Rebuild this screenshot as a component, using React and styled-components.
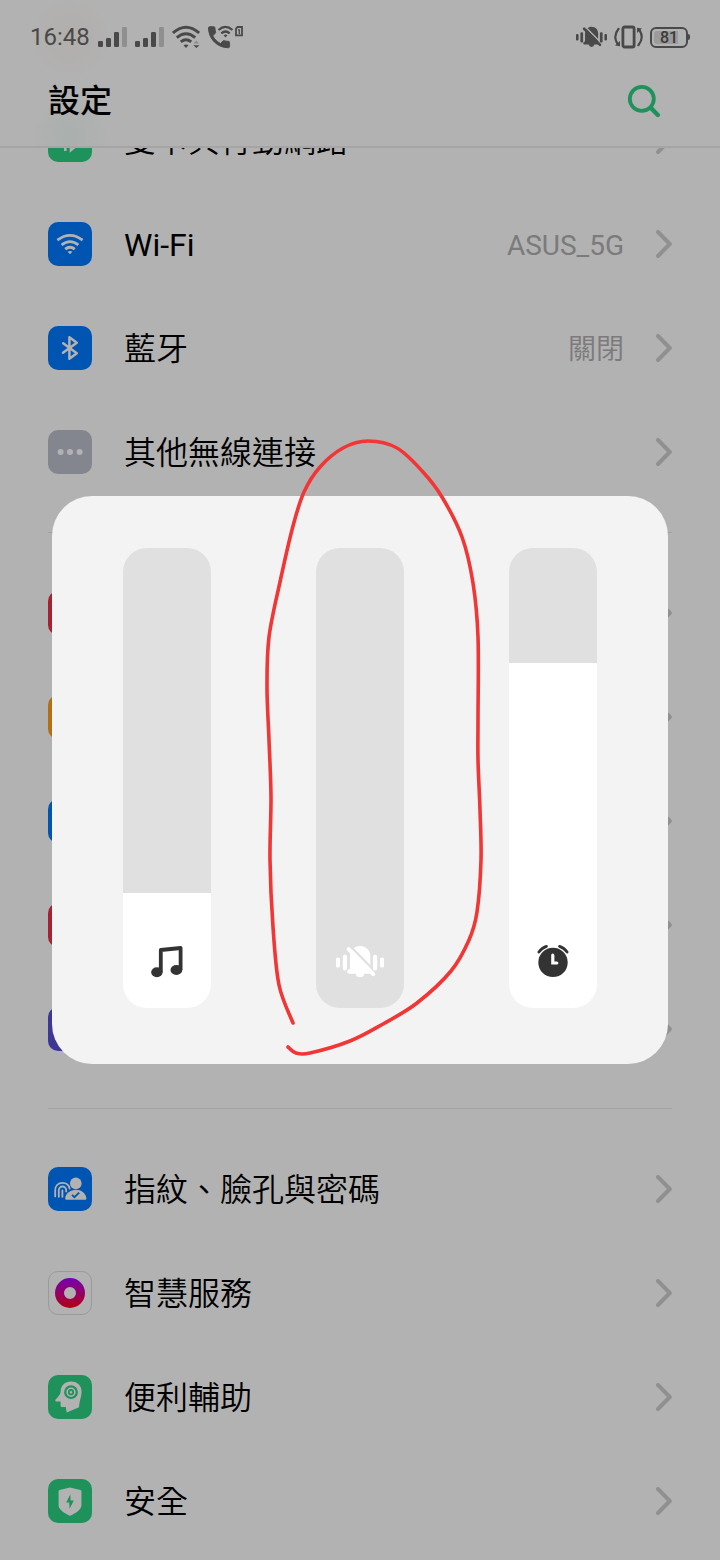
import React, { useId, useState } from 'react';
import styled, { createGlobalStyle, ThemeProvider } from 'styled-components';

const theme = {
  colors: {
    page: '#ffffff',
    text: '#000000',
    value: '#b0b0b0',
    chevron: '#cfcfcf',
    line: '#e8e8e8',
    status: '#696969',
    statusLight: '#cdcdcd',
    green: '#2bd282',
    blue: '#007aff',
    grey: '#bcc0cc',
    red: '#f03048',
    orange: '#ffa01e',
    purple: '#5b4fd6',
    panel: '#f3f3f3',
    track: '#e0e0e0',
    ink: '#333333',
    marker: '#f23535',
  },
  fontSizes: {
    xs: '16px',
    s: '24px',
    m: '28px',
    l: '32px',
  },
};

const GlobalStyle = createGlobalStyle`
  *, *::before, *::after {
    box-sizing: border-box;
  }
  body {
    margin: 0;
    background: #ffffff;
    font-family: Roboto, 'Noto Sans CJK TC', sans-serif;
  }
`;

const Page = styled.div`
  min-height: 100vh;
  background: ${({ theme }) => theme.colors.page};
  color: ${({ theme }) => theme.colors.text};
`;

const Header = styled.header`
  position: sticky;
  top: 0;
  z-index: 1;
  border-bottom: 2px solid #ececec;
  background:
    radial-gradient(circle at 70px 38px, rgba(255, 150, 70, 0.05), transparent 40px),
    radial-gradient(circle at 70px 136px, rgba(43, 210, 130, 0.06), transparent 40px),
    ${({ theme }) => theme.colors.page};
`;

const StatusBar = styled.div`
  display: flex;
  align-items: center;
  justify-content: space-between;
  height: 74px;
  padding: 0 30px;
  color: ${({ theme }) => theme.colors.status};
`;

const StatusGroup = styled.div`
  display: flex;
  align-items: center;
  gap: ${({ $tight }) => ($tight ? '7px' : '8px')};
`;

const Clock = styled.time`
  font-size: ${({ theme }) => theme.fontSizes.s};
  line-height: 28px;
`;

const Battery = styled.span`
  display: flex;
  align-items: center;
`;

const BatteryShell = styled.span`
  width: 38px;
  height: 21px;
  padding: 2px;
  border: 2px solid currentColor;
  border-radius: 6px;
`;

const BatteryLevel = styled.span`
  display: block;
  height: 13px;
  border-radius: 3px;
  background: linear-gradient(to right, #dedede ${({ $level }) => $level}%, transparent 0);
  color: #555555;
  font-size: ${({ theme }) => theme.fontSizes.xs};
  font-weight: 500;
  line-height: 14px;
  text-align: center;
`;

const BatteryTip = styled.span`
  width: 2px;
  height: 6px;
  border-radius: 0 2px 2px 0;
  background: currentColor;
`;

const TitleBar = styled.div`
  display: flex;
  align-items: center;
  justify-content: space-between;
  padding: 0 48px 18px;
`;

const Title = styled.h1`
  margin: 0;
  font-size: ${({ theme }) => theme.fontSizes.l};
  font-weight: 500;
  line-height: 54px;
`;

const SearchButton = styled.button`
  display: flex;
  align-items: center;
  justify-content: center;
  width: 56px;
  height: 54px;
  padding: 0;
  border: 0;
  background: none;
  color: ${({ theme }) => theme.colors.green};
  cursor: pointer;
`;

// the list is scrolled a little, so its first row goes under the header
const Content = styled.main`
  margin-top: -60px;
  padding: 0 48px 8px;
`;

const List = styled.ul`
  margin: 0;
  padding: 0;
  list-style: none;

  & + & {
    padding-top: 28px;
    margin-top: 28px;
    border-top: 1px solid ${({ theme }) => theme.colors.line};
    margin-bottom: -1px;
  }
`;

const RowLink = styled.a`
  display: flex;
  align-items: center;
  gap: 32px;
  height: 104px;
  color: inherit;
  text-decoration: none;
`;

const Tile = styled.span`
  flex: none;
  display: block;
  width: 44px;
  height: 44px;
  border-radius: 10px;
  border: ${({ $outlined }) => ($outlined ? '1px solid #dddddd' : '0')};
  overflow: hidden;
  background: ${({ theme, $color }) => theme.colors[$color]};
  color: #ffffff;
`;

// the Chinese face has a cut between light and regular, Roboto has not
const Label = styled.span`
  flex: 1;
  padding-top: 2px;
  font-size: ${({ theme }) => theme.fontSizes.l};
  font-weight: ${({ $latin }) => ($latin ? 400 : 350)};
  line-height: 48px;
`;

const Value = styled.span`
  padding-top: 4px;
  color: ${({ theme }) => theme.colors.value};
  font-size: ${({ theme }) => theme.fontSizes.m};
  font-weight: ${({ $latin }) => ($latin ? 400 : 350)};
  line-height: 40px;
`;

const Arrow = styled.svg`
  flex: none;
  color: ${({ theme }) => theme.colors.chevron};
`;

const Icon = styled.svg`
  display: block;
  flex: none;
`;

const Scrim = styled.div`
  position: fixed;
  inset: 0;
  z-index: 2;
  display: flex;
  align-items: center;
  justify-content: center;
  padding: 0 52px;
  background: rgba(0, 0, 0, 0.3);
`;

const VolumePanel = styled.section`
  display: flex;
  justify-content: space-between;
  width: 100%;
  padding: 52px 71px 56px;
  border-radius: 40px;
  background: ${({ theme }) => theme.colors.panel};
`;

const Slider = styled.label`
  position: relative;
  display: block;
  width: 88px;
  height: 460px;
  border-radius: 24px;
  overflow: hidden;
  color: ${({ theme, $muted }) => ($muted ? '#ffffff' : theme.colors.ink)};
`;

const Range = styled.input`
  display: block;
  width: 100%;
  height: 100%;
  margin: 0;
  appearance: none;
  writing-mode: vertical-lr;
  direction: rtl;
  background: linear-gradient(
    to top,
    #ffffff var(--level),
    ${({ theme }) => theme.colors.track} var(--level)
  );
  cursor: pointer;

  &::-webkit-slider-thumb {
    appearance: none;
    width: 88px;
    height: 1px;
    background: transparent;
  }
`;

const SliderIcon = styled.span`
  position: absolute;
  left: 0;
  right: 0;
  bottom: 28px;
  display: flex;
  align-items: center;
  justify-content: center;
  height: 36px;
  pointer-events: none;
`;

const Marker = styled.svg`
  position: absolute;
  inset: 0;
  width: 100%;
  height: 100%;
  pointer-events: none;
  color: ${({ theme }) => theme.colors.marker};
`;

/* status icons */

const SignalIcon = () => (
  <Icon width="29" height="20" viewBox="0 0 29 20" fill="currentColor">
    <rect x="0" y="14" width="5" height="6" rx="1.2" />
    <rect x="8" y="11" width="5" height="9" rx="1.2" />
    <rect x="16" y="5" width="5" height="15" rx="1.2" />
    <rect x="24" y="0" width="5" height="20" rx="1.2" fill={theme.colors.statusLight} />
  </Icon>
);

const WifiStatusIcon = () => (
  <Icon width="28" height="24" viewBox="0 0 28 24" fill="none" stroke="currentColor" strokeWidth="3">
    <path d="M0.9 8Q14-3.6 27.1 8" />
    <path d="M4.8 12.6Q14 4.8 23.2 12.6" />
    <path d="M8.8 16.8Q14 12.6 19.2 16.8" />
    <path d="M11.5 20.2Q14 18.6 16.5 20.2L14 23Z" fill="currentColor" stroke="none" />
    <path d="M21.4 18.5L24.4 15.6L27.4 18.5Z" fill={theme.colors.statusLight} stroke="none" />
    <path d="M21.4 20.2H27.4L24.4 23Z" fill="currentColor" stroke="none" />
  </Icon>
);

const WifiCallIcon = () => (
  <Icon width="36" height="24" viewBox="0 0 36 24" fill="none" stroke="currentColor">
    <path
      transform="translate(-3 -1.8) scale(1.17)"
      fill="currentColor"
      strokeWidth="0.8"
      d="M6.62 10.79c1.44 2.83 3.76 5.14 6.59 6.59l2.2-2.2c.27-.27.67-.36 1.02-.24 1.12.37 2.33.57 3.57.57.55 0 1 .45 1 1V20c0 .55-.45 1-1 1-9.39 0-17-7.61-17-17 0-.55.45-1 1-1h3.5c.55 0 1 .45 1 1 0 1.25.2 2.45.57 3.57.11.35.03.74-.25 1.02l-2.2 2.2z"
    />
    <path d="M10.5 5Q17.5-1.2 24.5 5" strokeWidth="2.2" />
    <path d="M13.3 8.4Q17.5 4.6 21.7 8.4" strokeWidth="2.2" />
    <path d="M15.6 10.2Q17.5 8.8 19.4 10.2L17.5 12.4Z" fill="currentColor" stroke="none" />
    <path d="M29.6 2H34V10.4H28V3.6Z" strokeWidth="1.8" />
    <path d="M29.9 4.8H31.3V9" strokeWidth="1.3" />
  </Icon>
);

const BellOffIcon = ({ width, height }) => {
  const id = useId();
  return (
    <Icon width={width} height={height} viewBox="0 0 48 34" fill="currentColor">
      <mask id={id}>
        <rect width="48" height="34" fill="#fff" />
        <path d="M12.2-1L41 28.4" stroke="#000" strokeWidth="2.2" />
      </mask>
      <rect x="0" y="12.4" width="4" height="10.2" rx="1.6" />
      <rect x="6.8" y="9.8" width="4.2" height="15.6" rx="1.6" />
      <rect x="37" y="9.8" width="4.2" height="15.6" rx="1.6" />
      <rect x="44" y="12.4" width="4" height="10.2" rx="1.6" />
      <path
        mask={`url(#${id})`}
        d="M14 10.6C15 4.4 19 1 24 1C29.8 1 34.3 5.4 34.3 11V24.4H36V28.8H28.4A4.5 4.5 0 0 1 19.6 28.8H13A2.1 2.1 0 0 1 12.4 24.8L14 23.6Z"
      />
      <path d="M12.6 4.2L37.2 29.2" stroke="currentColor" strokeWidth="4" strokeLinecap="round" />
    </Icon>
  );
};

const VibrateIcon = () => (
  <Icon width="29" height="24" viewBox="0 0 29 24" fill="none" stroke="currentColor" strokeWidth="2.2">
    <rect x="8.9" y="2" width="11.2" height="20" rx="1.8" strokeWidth="2.8" />
    <path d="M4.6 3.8C0.8 8.4 0.6 14 3.2 18.4" strokeLinecap="round" />
    <path d="M6 16V21.2L1 20.6Z" fill="currentColor" stroke="none" />
    <path d="M24.4 20.2C28.2 15.6 28.4 10 25.8 5.6" strokeLinecap="round" />
    <path d="M23 8V2.8L28 3.4Z" fill="currentColor" stroke="none" />
  </Icon>
);

const SearchIcon = () => (
  <Icon width="34" height="34" viewBox="0 0 34 34" fill="none" stroke="currentColor" strokeLinecap="round">
    <circle cx="14.8" cy="14.8" r="12" strokeWidth="3.8" />
    <path d="M24 24L30.8 31" strokeWidth="4.4" />
  </Icon>
);

const Chevron = () => (
  <Arrow width="16" height="28" viewBox="0 0 16 28" fill="none" stroke="currentColor" strokeWidth="4" strokeLinecap="round" strokeLinejoin="round">
    <path d="M2 2L13.8 14L2 26" />
  </Arrow>
);

/* tile icons, all drawn on a 44 x 44 grid */

const SimIcon = () => (
  <g fill="none" stroke="currentColor" strokeWidth="2.6">
    <path d="M11 17L17.3 11V33" />
    <path d="M29.6 26.4L23 32V11" />
  </g>
);

const WifiIcon = () => (
  <g fill="none" stroke="currentColor" strokeWidth="2.8">
    <path d="M9.4 18.2Q22 8.6 34.6 18.2" />
    <path d="M13.6 23Q22 16.2 30.4 23" />
    <path d="M17.2 27.2Q22 23.4 26.8 27.2" />
    <path d="M19.6 29.8Q22 28.2 24.4 29.8L22 32.2Z" fill="currentColor" stroke="none" />
  </g>
);

const BluetoothIcon = () => (
  <path
    d="M15.2 17.2L28.8 27.2L21.4 32.8V11.2L28.8 16.8L15 26.8"
    fill="none"
    stroke="currentColor"
    strokeWidth="2.5"
    strokeLinecap="round"
    strokeLinejoin="round"
  />
);

const MoreIcon = () => (
  <g fill="currentColor">
    <circle cx="12.6" cy="22" r="3" />
    <circle cx="22" cy="22" r="3" />
    <circle cx="31.6" cy="22" r="3" />
  </g>
);

const BiometricsIcon = () => (
  <g fill="currentColor">
    <circle cx="27.8" cy="16.4" r="5.8" />
    <path d="M17.2 31.4C17.2 26.8 22.6 22.8 28 22.8C33.2 22.8 37.4 26 38.4 31C38.6 32 38 32.8 37 32.8H18.6C17.8 32.8 17.2 32.2 17.2 31.4Z" />
    <path d="M24 27.8L26.4 30.2L31.2 25.6" fill="none" stroke={theme.colors.blue} strokeWidth="1.8" />
    <g fill="none" stroke="currentColor" strokeWidth="1.8" strokeLinecap="round">
      <path d="M7.2 29.4V23.4C7.2 18.6 10.4 15.8 14.4 15.8C18.2 15.8 21 18 21.6 21.6" />
      <path d="M10.8 29.8V23.2A3.7 3.7 0 0 1 18.2 23.2V24.4" />
      <path d="M14.4 29.8V23.4" />
    </g>
  </g>
);

const SmartIcon = () => (
  <>
    <linearGradient id="smart" x1="0" y1="0" x2="0" y2="1">
      <stop offset="0" stopColor="#a400ff" />
      <stop offset="0.5" stopColor="#d60094" />
      <stop offset="1" stopColor="#ff0018" />
    </linearGradient>
    <path fill="url(#smart)" fillRule="evenodd" d="M22 7A15 15 0 0 1 22 37A15 15 0 0 1 22 7ZM22 16A6 6 0 0 0 22 28A6 6 0 0 0 22 16Z" />
  </>
);

const HeadIcon = () => (
  <>
    <path
      fill="currentColor"
      d="M12.6 17C12.8 10.6 17 6.6 23.2 6.6C29.6 6.6 33.8 10.8 33.6 17C33.5 20.6 32 25 31.4 28.4C31 30.4 31.6 32 30 32.8L18.6 37.4L17.8 32H14.2C13 32 12.6 31.4 12.6 30.4V26.4H8.2C7.2 26.4 7 25.4 7.6 24.6C9.8 21.8 12.4 20 12.6 17Z"
    />
    <circle cx="23" cy="17.2" r="5.8" fill="none" stroke={theme.colors.green} strokeWidth="2.2" />
    <circle cx="23" cy="17.2" r="2.2" fill="none" stroke={theme.colors.green} strokeWidth="1.8" />
  </>
);

const ShieldIcon = () => (
  <>
    <path
      fill="currentColor"
      d="M22 8.4L32.4 11C33.1 11.2 33.4 11.6 33.4 12.2V26.2C33.4 31 27 34.4 22 36.8C17 34.4 10.6 31 10.6 26.2V12.2C10.6 11.6 10.9 11.2 11.6 11Z"
    />
    <path fill={theme.colors.green} d="M22.4 15.2L18.2 23.6H21.2L21.6 29.8L25.8 21.4H22.6Z" />
  </>
);

/* slider icons */

const MusicIcon = () => (
  <Icon width="32" height="32" viewBox="0 0 32 32" fill="currentColor">
    <ellipse cx="5.9" cy="26.2" rx="5.7" ry="5" />
    <ellipse cx="25.4" cy="24" rx="5.9" ry="5" />
    <path d="M9.8 26V4L29.6 2V24" fill="none" stroke="currentColor" strokeWidth="3.8" strokeLinejoin="round" />
  </Icon>
);

const AlarmIcon = () => (
  <Icon width="32" height="34" viewBox="0 0 32 34" fill="none" stroke="currentColor" strokeLinecap="round" strokeWidth="2.8">
    <circle cx="16" cy="17.4" r="14.7" fill="currentColor" stroke="none" />
    <path d="M1.9 7Q5 2.8 9.4 1.4" />
    <path d="M30.1 7Q27 2.8 22.6 1.4" />
    <path d="M15.8 10.2V18H19.8" stroke="#fff" strokeWidth="3.2" />
  </Icon>
);

const sections = [
  [
    { label: '雙卡與行動網路', color: 'green', icon: SimIcon },
    { label: 'Wi-Fi', color: 'blue', icon: WifiIcon, value: 'ASUS_5G', latin: true },
    { label: '藍牙', color: 'blue', icon: BluetoothIcon, value: '關閉' },
    { label: '其他無線連接', color: 'grey', icon: MoreIcon },
  ],
  [{ color: 'red' }, { color: 'orange' }, { color: 'blue' }, { color: 'red' }, { color: 'purple' }],
  [
    { label: '指紋、臉孔與密碼', color: 'blue', icon: BiometricsIcon },
    { label: '智慧服務', color: 'page', icon: SmartIcon, outlined: true },
    { label: '便利輔助', color: 'green', icon: HeadIcon },
    { label: '安全', color: 'green', icon: ShieldIcon },
  ],
];

const SettingRow = ({ label, color, icon: Glyph, value, outlined, latin }) => (
  <li>
    <RowLink href="#">
      <Tile $color={color} $outlined={outlined}>
        {Glyph && (
          <Icon width="100%" height="100%" viewBox={outlined ? '1 1 42 42' : '0 0 44 44'}>
            <Glyph />
          </Icon>
        )}
      </Tile>
      <Label $latin={latin}>{label}</Label>
      {value && <Value $latin={latin}>{value}</Value>}
      <Chevron />
    </RowLink>
  </li>
);

const VolumeSlider = ({ name, initial, muted, children }) => {
  const [level, setLevel] = useState(initial);
  return (
    <Slider $muted={muted}>
      <Range
        type="range"
        min="0"
        max="100"
        aria-label={name}
        value={level}
        onChange={(e) => setLevel(Number(e.target.value))}
        style={{ '--level': `${level}%` }}
      />
      <SliderIcon>{children}</SliderIcon>
    </Slider>
  );
};

// freehand stroke round the middle slider
const strokePoints = [
  [293, 1023], [279, 985], [273, 927], [270, 860], [271, 797], [269, 740], [267, 687],
  [269, 637], [280, 582], [293, 526], [304, 492], [320, 467], [343, 448], [368, 441],
  [397, 448], [423, 472], [442, 497], [462, 537], [473, 583], [478, 637], [478, 720],
  [478, 760], [480, 810], [481, 860], [477, 912], [469, 940], [451, 971], [417, 1003],
  [383, 1024], [350, 1041], [310, 1053], [296, 1053], [288, 1047],
];

const smoothPath = (points) =>
  points.slice(1).reduce((d, p, i) => {
    const p0 = points[i - 1] || points[i];
    const p1 = points[i];
    const p3 = points[i + 2] || p;
    const c1 = [p1[0] + (p[0] - p0[0]) / 6, p1[1] + (p[1] - p0[1]) / 6];
    const c2 = [p[0] - (p3[0] - p1[0]) / 6, p[1] - (p3[1] - p1[1]) / 6];
    return `${d}C${c1} ${c2} ${p}`;
  }, `M${points[0]}`);

const App = () => (
  <ThemeProvider theme={theme}>
    <GlobalStyle />
    <Page>
      <Header>
        <StatusBar>
          <StatusGroup>
            <Clock>16:48</Clock>
            <SignalIcon />
            <SignalIcon />
            <WifiStatusIcon />
            <WifiCallIcon />
          </StatusGroup>
          <StatusGroup $tight>
            <BellOffIcon width={31} height={22} />
            <VibrateIcon />
            <Battery>
              <BatteryShell>
                <BatteryLevel $level={81}>81</BatteryLevel>
              </BatteryShell>
              <BatteryTip />
            </Battery>
          </StatusGroup>
        </StatusBar>
        <TitleBar>
          <Title>設定</Title>
          <SearchButton type="button" aria-label="搜尋">
            <SearchIcon />
          </SearchButton>
        </TitleBar>
      </Header>
      <Content>
        {sections.map((rows, i) => (
          <List key={i}>
            {rows.map((row, j) => (
              <SettingRow key={j} {...row} />
            ))}
          </List>
        ))}
      </Content>
      <Scrim>
        <VolumePanel role="dialog" aria-label="音量">
          <VolumeSlider name="媒體" initial={25}>
            <MusicIcon />
          </VolumeSlider>
          <VolumeSlider name="鈴聲" initial={0} muted>
            <BellOffIcon width={48} height={34} />
          </VolumeSlider>
          <VolumeSlider name="鬧鐘" initial={75}>
            <AlarmIcon />
          </VolumeSlider>
        </VolumePanel>
        <Marker viewBox="0 0 720 1560" fill="none" stroke="currentColor" strokeWidth="3.6" strokeLinecap="round">
          <path d={smoothPath(strokePoints)} />
        </Marker>
      </Scrim>
    </Page>
  </ThemeProvider>
);

export default App;
